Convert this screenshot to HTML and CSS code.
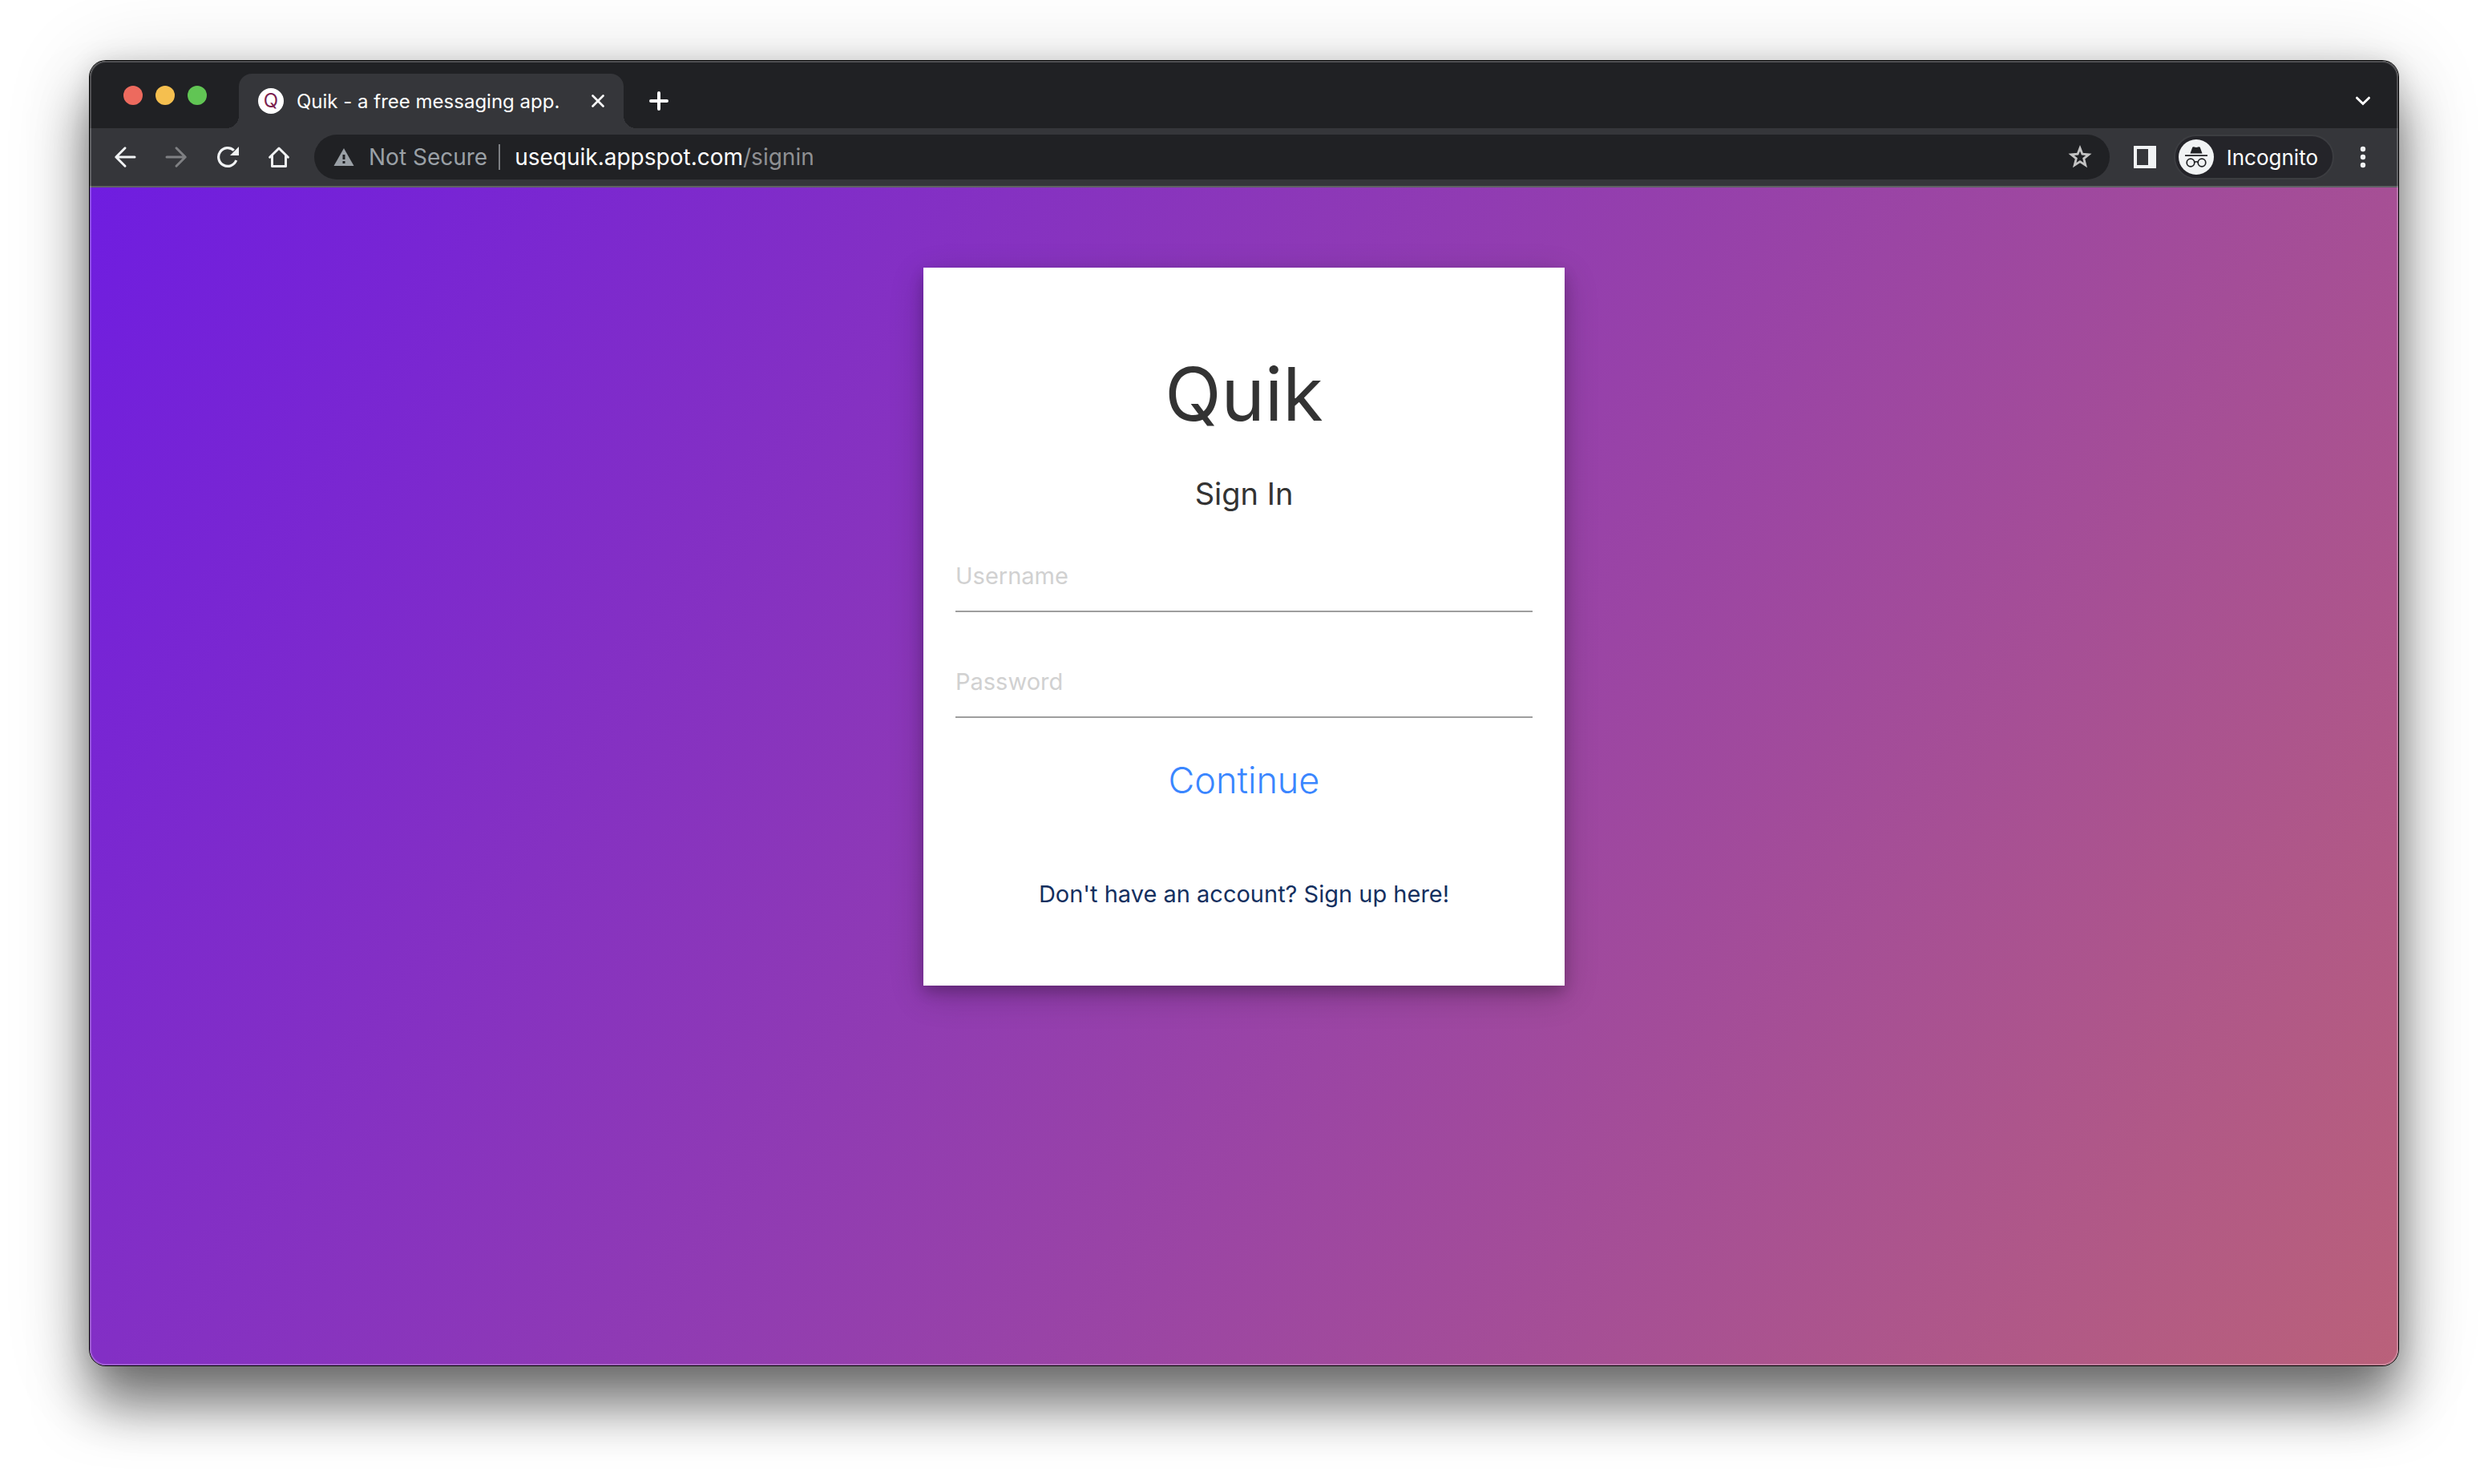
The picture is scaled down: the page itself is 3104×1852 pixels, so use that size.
FILE: index.html
```html
<!DOCTYPE html>
<html lang="en">
<head>
<meta charset="utf-8">
<title>Quik - a free messaging app.</title>
<link rel="stylesheet" href="styles.css">
</head>
<body>
<div class="window">
  <header class="tab-strip">
    <div class="lights">
      <button class="light light-close" type="button" aria-label="Close window"></button>
      <button class="light light-min" type="button" aria-label="Minimize window"></button>
      <button class="light light-zoom" type="button" aria-label="Zoom window"></button>
    </div>
    <div class="tab">
      <span class="favicon" aria-hidden="true">Q</span>
      <span class="tab-title">Quik - a free messaging app.</span>
      <button class="icon-btn" type="button" aria-label="Close tab">
        <svg width="16" height="16" viewBox="0 0 16 16"><path d="M1.500 1.500 14.500 14.500M14.500 1.500 1.500 14.500" stroke="#fff" stroke-width="2.600" stroke-linecap="round"/></svg>
      </button>
    </div>
    <button class="icon-btn new-tab" type="button" aria-label="New tab">
      <svg width="24" height="24" viewBox="0 0 24 24"><path d="M12 2v20M2 12h20" stroke="#fff" stroke-width="4" stroke-linecap="round"/></svg>
    </button>
    <button class="icon-btn tab-search" type="button" aria-label="Search tabs">
      <svg width="20" height="12" viewBox="0 0 20 12"><path d="M2.500 2.200 10 9.500l7.500-7.300" fill="none" stroke="#fff" stroke-width="3" stroke-linecap="round" stroke-linejoin="miter"/></svg>
    </button>
  </header>

  <nav class="toolbar" aria-label="Browser toolbar">
    <div class="nav-buttons">
      <button class="icon-btn" type="button" aria-label="Back">
        <svg width="28" height="28" viewBox="0 0 28 28"><path d="M14 2.800 2.800 14 14 25.200M2.800 14H26" fill="none" stroke="#f1f3f4" stroke-width="3" stroke-linecap="round" stroke-linejoin="round"/></svg>
      </button>
      <button class="icon-btn" type="button" aria-label="Forward">
        <svg width="28" height="28" viewBox="0 0 28 28"><path d="M14 2.800 25.200 14 14 25.200M25.200 14H2" fill="none" stroke="#7f8083" stroke-width="3" stroke-linecap="round" stroke-linejoin="round"/></svg>
      </button>
      <button class="icon-btn" type="button" aria-label="Reload">
        <svg width="28" height="28" viewBox="0 0 28 28"><path d="M24.700 18A11.400 11.400 0 1 1 21.800 5.600" fill="none" stroke="#f1f3f4" stroke-width="3.200"/><path d="M28 1v11H17z" fill="#f1f3f4"/></svg>
      </button>
      <button class="icon-btn" type="button" aria-label="Home">
        <svg width="28" height="28" viewBox="0 0 28 28"><path d="M2.600 14.200 14 3l11.400 11.200M5.500 12.500V25.500h17V12.500" fill="none" stroke="#f1f3f4" stroke-width="3" stroke-linecap="round" stroke-linejoin="round"/></svg>
      </button>
    </div>

    <div class="omnibox">
      <svg class="warning" width="26" height="22" viewBox="0 0 26 22"><path d="M13 0 25.500 22H.5z" fill="#9aa0a6"/><path d="M11.500 8h3v6h-3zM11.500 16h3v3h-3z" fill="#202124"/></svg>
      <span class="security">Not Secure</span>
      <span class="divider"></span>
      <span class="url">usequik.appspot.com<span class="path">/signin</span></span>
      <button class="icon-btn star" type="button" aria-label="Bookmark this page">
        <svg width="30" height="30" viewBox="0 0 30 30"><path d="m15 3.800 2.900 7.400 8 .6-6.200 5 2.100 8.400L15 20.700l-6.800 4.500 2.100-8.400-6.200-5 8-.6z" fill="none" stroke="#c4c4c4" stroke-width="2.800"/></svg>
      </button>
    </div>

    <button class="icon-btn side-panel" type="button" aria-label="Side panel">
      <svg width="28" height="28" viewBox="0 0 28 28"><path d="M0 0h28v28H0zM4 4v20h14V4z" fill="#f1f3f4" fill-rule="evenodd"/></svg>
    </button>
    <button class="profile" type="button">
      <svg width="44" height="44" viewBox="0 0 44 44"><circle cx="22" cy="22" r="22" fill="#f1f3f4"/><path d="M14.500 17.500l2.700-7.400q.4-1 1.500-.8l3.300.8 3.300-.8q1.100-.2 1.500.8l2.700 7.400zM8 19.300h28v1.700H8z" fill="#202124"/><g fill="none" stroke="#202124" stroke-width="1.700"><circle cx="15" cy="29" r="4.800"/><circle cx="29" cy="29" r="4.800"/><path d="M19.800 28.500q2.200-1.500 4.400 0"/></g></svg>
      <span>Incognito</span>
    </button>
    <button class="icon-btn" type="button" aria-label="Menu">
      <svg width="8" height="28" viewBox="0 0 8 28"><g fill="#f1f3f4"><circle cx="4" cy="4" r="3.200"/><circle cx="4" cy="14" r="3.200"/><circle cx="4" cy="24" r="3.200"/></g></svg>
    </button>
  </nav>

  <main class="page">
    <form class="card">
      <h1 class="brand">Quik</h1>
      <h2 class="heading">Sign In</h2>
      <input class="field" type="text" placeholder="Username" aria-label="Username">
      <input class="field" type="password" placeholder="Password" aria-label="Password">
      <button class="continue" type="button">Continue</button>
      <a class="signup" href="#signup">Don't have an account? Sign up here!</a>
    </form>
  </main>
</div>
</body>
</html>
```
FILE: styles.css
```css
* {
  box-sizing: border-box;
}

body {
  margin: 0;
  padding: 76px 112px 148px;
  background: #fff;
  font-family: Inter, "Liberation Sans", sans-serif;
}

button {
  margin: 0;
  padding: 0;
  border: 0;
  background: none;
  font: inherit;
  color: inherit;
}

svg {
  display: block;
}

.window {
  position: relative;
  display: flex;
  flex-direction: column;
  min-height: calc(100vh - 224px);
  border-radius: 20px;
  overflow: hidden;
  box-shadow: 0 0 0 1px #000, 0 0 30px rgba(0, 0, 0, 0.12), 0 10px 110px rgba(0, 0, 0, 0.16), 0 50px 66px rgba(0, 0, 0, 0.5);
}

/* light rim inside the window edge */
.window::after {
  content: "";
  position: absolute;
  inset: 0;
  border: 2px solid rgba(255, 255, 255, 0.22);
  border-radius: 20px;
  pointer-events: none;
}

/* Tab strip */
.tab-strip {
  display: flex;
  align-items: flex-end;
  height: 84px;
  padding-left: 42px;
  padding-right: 34px;
  background: #202124;
}

.lights {
  display: flex;
  gap: 16px;
  width: 144px;
  padding-bottom: 29px;
}

.light {
  width: 24px;
  height: 24px;
  border-radius: 50%;
}

.light-close { background: #ed6a5e; }
.light-min { background: #f5bf4f; }
.light-zoom { background: #61c554; }

.tab {
  position: relative;
  display: flex;
  align-items: center;
  width: 480px;
  height: 68px;
  padding: 0 24px;
  border-radius: 16px 16px 0 0;
  background: #35363a;
  color: #fff;
}

/* flared feet of the tab */
.tab::before,
.tab::after {
  content: "";
  position: absolute;
  bottom: 0;
  width: 16px;
  height: 16px;
}

.tab::before {
  right: 100%;
  background: radial-gradient(circle at 0 0, #202124 16px, #35363a 16px);
}

.tab::after {
  left: 100%;
  background: radial-gradient(circle at 100% 0, #202124 16px, #35363a 16px);
}

.favicon {
  width: 32px;
  height: 32px;
  margin-right: 16px;
  border-radius: 50%;
  background: #fff;
  color: #7b1f50;
  font-size: 24px;
  line-height: 32px;
  text-align: center;
}

.tab-title {
  flex: 1;
  font-size: 24px;
  white-space: nowrap;
}

.icon-btn {
  flex: none;
  display: flex;
  align-items: center;
  justify-content: center;
}

.new-tab {
  height: 68px;
  margin-left: 32px;
}

.tab-search {
  height: 68px;
  margin-left: auto;
}

/* Toolbar */
.toolbar {
  display: flex;
  align-items: center;
  height: 74px;
  padding: 0 40px 0 30px;
  border-bottom: 2px solid #5f6064;
  background: #35363a;
}

.nav-buttons {
  display: flex;
  gap: 36px;
  margin-right: 30px;
}

.omnibox {
  flex: 1;
  display: flex;
  align-items: center;
  height: 56px;
  padding: 0 22px 0 24px;
  border-radius: 28px;
  background: #202124;
  font-size: 28px;
  white-space: nowrap;
}

.security {
  margin-left: 18px;
  color: #9aa0a6;
}

.divider {
  width: 2px;
  height: 32px;
  margin: 0 18px 0 14px;
  background: #7d7f83;
}

.url {
  color: #fff;
}

.path {
  color: #8f9093;
}

.star {
  margin-left: auto;
}

.side-panel {
  margin-left: 30px;
}

.profile {
  display: flex;
  align-items: center;
  gap: 16px;
  height: 56px;
  margin: 0 32px 0 22px;
  padding: 0 18px 0 4px;
  border: 2px solid #3c3d41;
  border-radius: 28px;
  background: #242429;
  color: #fff;
  font-size: 26px;
}

/* Page */
.page {
  flex: 1;
  padding: 100px 40px;
  background: linear-gradient(125deg, #6f1de0, #ba617a);
}

.card {
  display: flex;
  flex-direction: column;
  width: 100%;
  max-width: 800px;
  min-height: 896px;
  margin: 0 auto;
  padding: 102px 40px 80px;
  background: #fff;
  box-shadow: 0 8px 16px rgba(0, 0, 0, 0.2), 0 12px 40px rgba(0, 0, 0, 0.2);
  color: #333;
  text-align: center;
}

.brand {
  margin: 0;
  font-size: 92px;
  font-weight: 400;
  line-height: 112px;
}

.heading {
  margin: 42px 0 32px;
  font-size: 38px;
  font-weight: 400;
  line-height: 52px;
}

.field {
  height: 90px;
  margin: 0 0 42px;
  padding: 0;
  border: 0;
  border-bottom: 2px solid #9e9e9e;
  border-radius: 0;
  background: none;
  color: #333;
  font: 400 29px Inter, "Liberation Sans", sans-serif;
}

.field::placeholder {
  color: #d1d1d1;
  opacity: 1;
}

.continue {
  color: #3a86ff;
  font-size: 45px;
  font-weight: 300;
  line-height: 72px;
}

.signup {
  margin-top: 86px;
  color: #14305f;
  font-size: 29px;
  line-height: 40px;
  text-decoration: none;
}
```
